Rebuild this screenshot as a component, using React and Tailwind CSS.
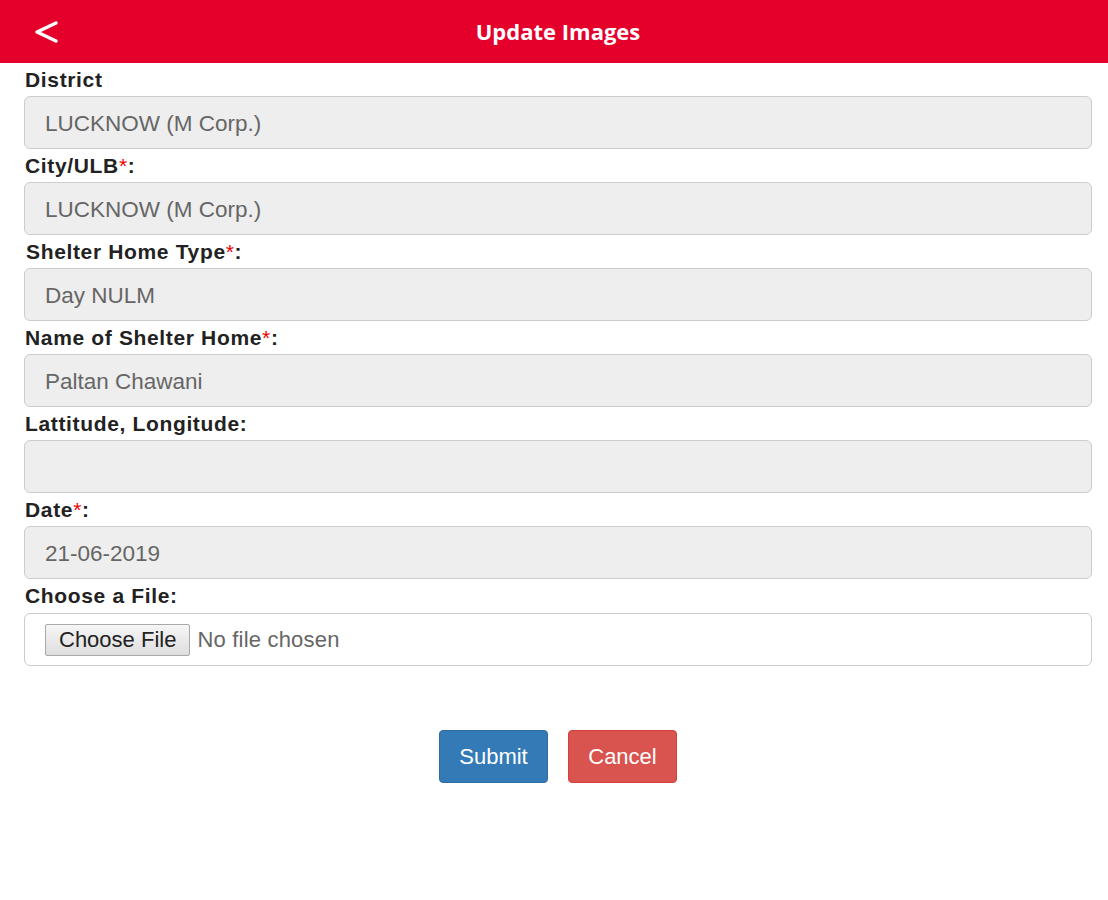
import React from "react";

const fields = [
  { label: "District", value: "LUCKNOW (M Corp.)" },
  { label: "City/ULB", req: true, colon: true, value: "LUCKNOW (M Corp.)" },
  { label: "Shelter Home Type", req: true, colon: true, value: "Day NULM", shift: true },
  { label: "Name of Shelter Home", req: true, colon: true, value: "Paltan Chawani" },
  { label: "Lattitude, Longitude:", value: "" },
  { label: "Date", req: true, colon: true, value: "21-06-2019" },
];

function Label({ f }) {
  return (
    <div className={`h-[33px] flex items-center text-[21px] font-bold text-[#222] tracking-[0.65px] ${f.shift ? "pl-[2px]" : "pl-[1px]"}`}>
      {f.label}
      {f.req && <span className="text-[#e00] font-normal">*</span>}
      {f.colon && ":"}
    </div>
  );
}

export default function App() {
  return (
    <div className="w-[1108px] h-[900px] bg-white" style={{ fontFamily: '"Liberation Sans", Arial, sans-serif' }}>
      <div className="h-[63px] bg-[#e4002b] relative flex items-center justify-center">
        <svg className="absolute left-[33px] top-[20px]" width="26" height="24" viewBox="0 0 26 24">
          <polyline points="23,3 4,12 23,21" fill="none" stroke="white" strokeWidth="3.5" strokeLinecap="round" strokeLinejoin="round" />
        </svg>
        <span className="text-white text-[22px] font-bold ml-[8px]" style={{ fontFamily: '"Open Sans", sans-serif' }}>
          Update Images
        </span>
      </div>
      <div className="px-[24px] pr-[16px]">
        {fields.map((f) => (
          <div key={f.label}>
            <Label f={f} />
            <div className="h-[53px] bg-[#eeeeee] border border-[#cccccc] rounded-[6px] flex items-center pl-[20px] pt-[3px] text-[22.5px] text-[#666]">
              {f.value}
            </div>
          </div>
        ))}
        <div className="h-[34px] flex items-center text-[21px] font-bold text-[#222] tracking-[0.65px] pl-[1px]">Choose a File:</div>
        <div className="h-[53px] bg-white border border-[#cccccc] rounded-[6px] flex items-center pl-[20px] text-[22px]">
          <div className="h-[32px] px-[13px] flex items-center bg-gradient-to-b from-[#f6f6f6] to-[#dedede] border border-[#a9a9a9] rounded-[2px] text-[#222]">
            Choose File
          </div>
          <span className="ml-[7px] text-[#666] tracking-[0.2px]">No file chosen</span>
        </div>
        <div className="flex justify-center gap-[20px] mt-[64px]">
          <button className="w-[109px] h-[53px] bg-[#337ab7] border border-[#2e6da4] rounded-[4px] text-white text-[22px]">Submit</button>
          <button className="w-[109px] h-[53px] bg-[#d9534f] border border-[#d43f3a] rounded-[4px] text-white text-[22px]">Cancel</button>
        </div>
      </div>
    </div>
  );
}
